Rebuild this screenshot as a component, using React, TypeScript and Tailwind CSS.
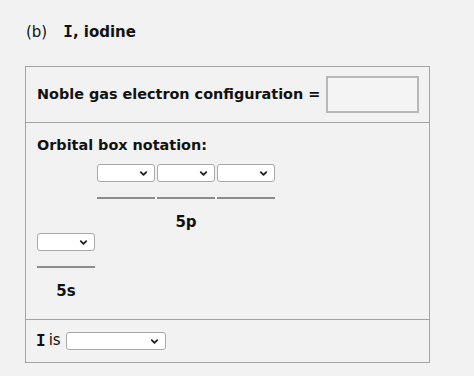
import React from "react";
import { ChevronDown } from "lucide-react";

const Pick = ({ w = "w-[58px]" }: { w?: string }) => (
  <div className={`relative h-[18px] ${w}`}>
    <select className="appearance-none w-full h-full bg-white border border-[#a9a9a9] rounded-[3px] outline-none" />
    <ChevronDown
      className="absolute right-[6px] top-[4px] pointer-events-none"
      size={11}
      strokeWidth={4}
      color="#222"
    />
  </div>
);

const Slot = ({ w = "w-[58px]" }: { w?: string }) => (
  <div className={`flex flex-col ${w}`}>
    <Pick w={w} />
    <div className="mt-[15px] h-[2px] bg-[#8c8c8c]" />
  </div>
);

export default function App() {
  return (
    <div className="w-[474px] h-[376px] bg-[#f2f2f2] text-[#111] font-['DejaVu_Sans',Verdana,sans-serif] pt-[20px] pl-[25px]">
      <p className="text-[15px] pl-[1px] h-[46px] whitespace-nowrap">
        (b)
        <b className="ml-[16px] text-[16px] font-['DejaVu_Sans_Mono',monospace]">I</b>
        <b>, iodine</b>
      </p>

      <div className="w-[405px] border border-[#a3a3a3]">
        <div className="h-[56px] flex items-center pl-[11px] border-b border-[#a3a3a3]">
          <span className="text-[14.4px] font-bold whitespace-nowrap">Noble gas electron configuration =</span>
          <div className="ml-[6px] w-[93px] h-[37px] border-2 border-[#b8b8b8] bg-[#f4f4f4]" />
        </div>

        <div className="h-[197px] border-b border-[#a3a3a3] pl-[11px] pt-[12px]">
          <p className="text-[14.4px] font-bold leading-[20px]">Orbital box notation:</p>
          <div className="ml-[60px] mt-[9px] flex gap-[2px]">
            <Slot />
            <div className="flex flex-col items-center">
              <Slot />
              <span className="mt-[14px] text-[15px] font-bold leading-[18px]">5p</span>
            </div>
            <Slot />
          </div>
          <div className="mt-[2px] flex flex-col items-center w-[58px]">
            <Slot />
            <span className="mt-[14px] text-[15px] font-bold leading-[18px]">5s</span>
          </div>
        </div>

        <div className="h-[42px] flex items-center pl-[10px] pb-[1px]">
          <b className="text-[16px] font-['DejaVu_Sans_Mono',monospace]">I</b>
          <span className="text-[15px] ml-[3px] mr-[5px]">is</span>
          <Pick w="w-[100px]" />
        </div>
      </div>
    </div>
  );
}
